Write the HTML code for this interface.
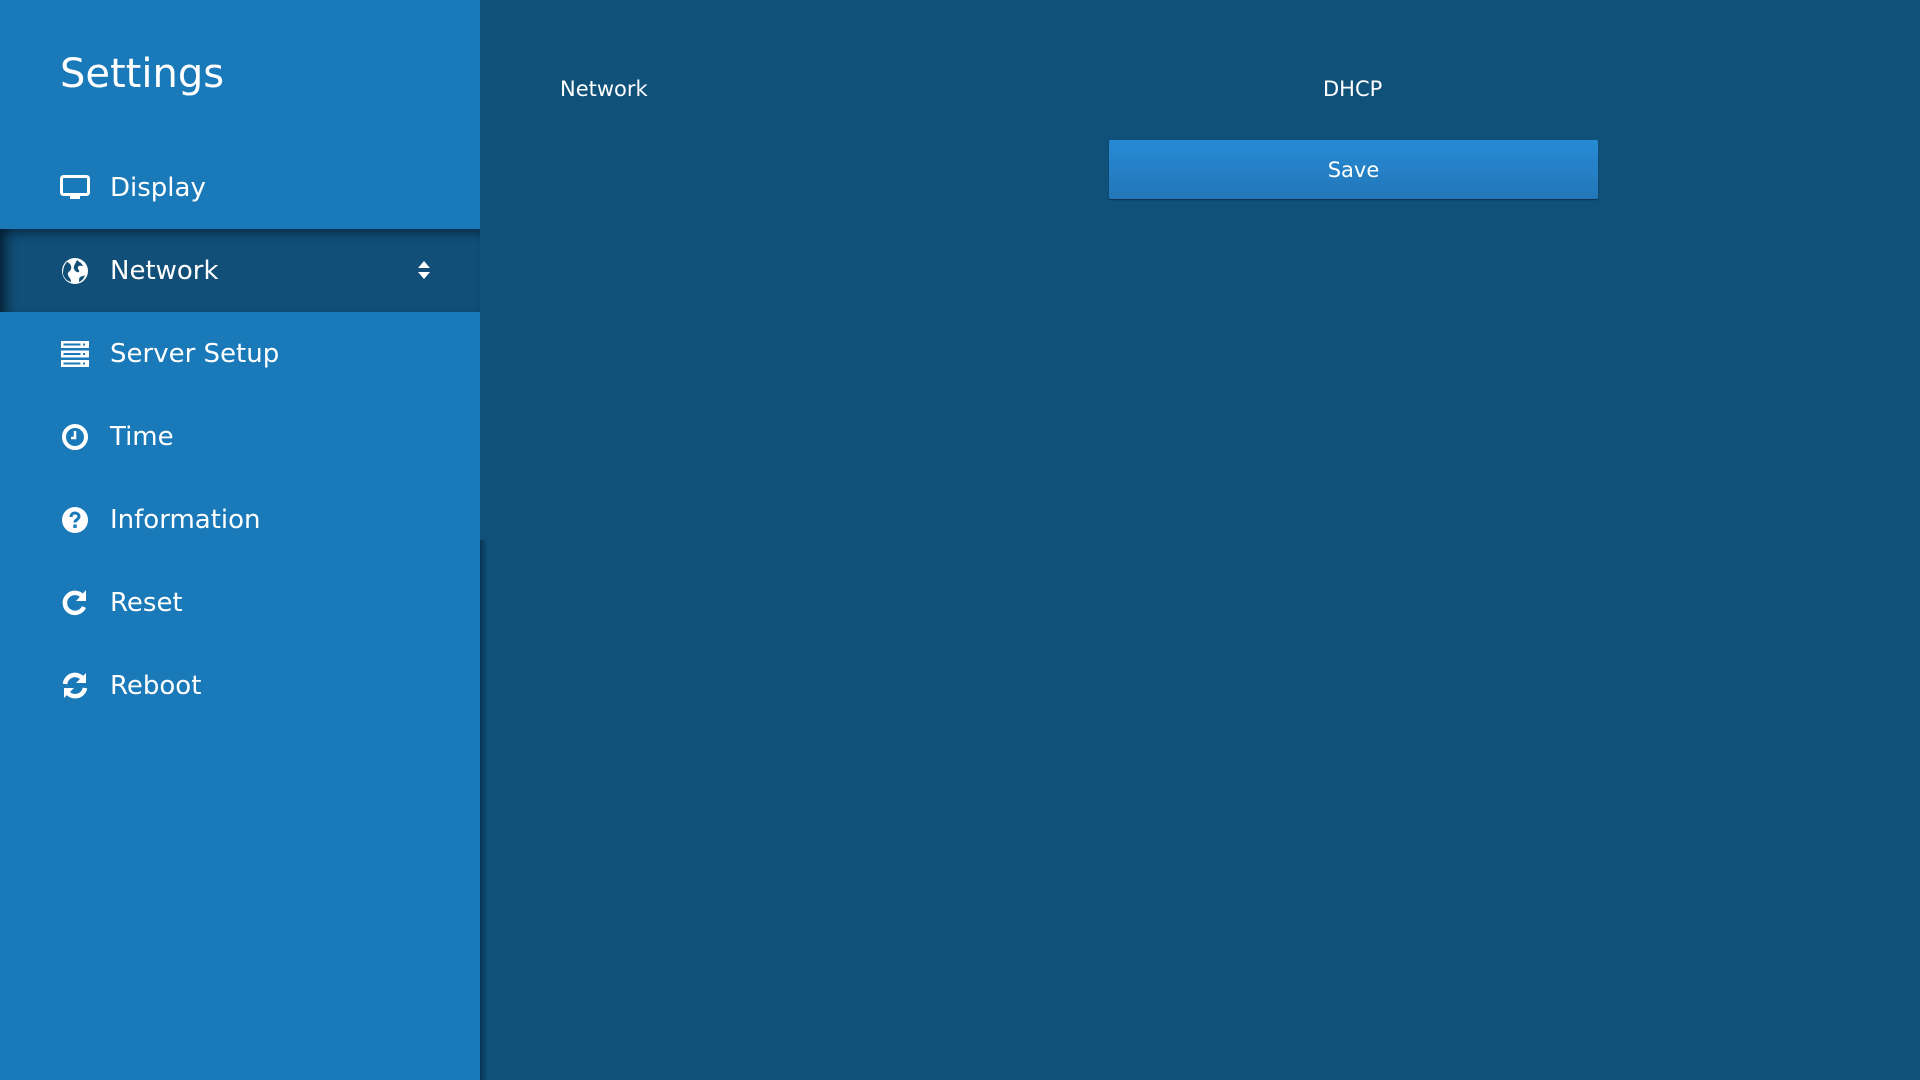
<!DOCTYPE html>
<html><head><meta charset="utf-8"><style>
html,body{margin:0;padding:0;width:1920px;height:1080px;overflow:hidden;background:#10517a;font-family:"DejaVu Sans","Liberation Sans",sans-serif;color:#fff}
#side{position:absolute;left:0;top:0;width:480px;height:1080px;background:#1a79b8}
#shade{position:absolute;left:480px;top:540px;width:8px;height:540px;background:linear-gradient(90deg,rgba(0,20,40,.45),rgba(0,20,40,0))}
h1{position:absolute;left:60px;top:46px;margin:0;font-weight:normal;font-size:40px;line-height:56px}
.row{position:absolute;left:0;width:480px;height:83px;}
.row .ic{position:absolute;left:60px;top:27px;width:30px;height:30px}
.row .t{position:absolute;left:110px;top:1px;line-height:83px;font-size:26px}
.act{background:#114f78;box-shadow:inset 0 10px 10px -6px rgba(0,20,40,.6),inset 14px 0 12px -8px rgba(0,0,0,.55)}
.lbl{position:absolute;font-size:21px;line-height:24px}
#save{position:absolute;left:1109px;top:140px;width:489px;height:59px;background:linear-gradient(#268ad5,#2477b8);border-radius:2px;box-shadow:0 1px 1px #0a2f4a;text-align:center;line-height:60px;font-size:21px}
</style></head><body>
<div id="side">
<h1>Settings</h1>
<div class="row" style="top:146px"><svg class="ic" viewBox="0 0 30 30"><rect x="1.5" y="3.5" width="27" height="18" rx="2" fill="none" stroke="#fff" stroke-width="3"/><rect x="10" y="22" width="10" height="4" fill="#fff"/></svg><span class="t">Display</span></div>
<div class="row act" style="top:229px;height:83px"><svg class="ic" viewBox="0 0 30 30"><circle cx="15" cy="15" r="13" fill="#fff"/><path d="M7 6c3 1 5 4 4 7s-4 3-3 6 3 3 3 7c-4-1-7-4-8-8 0-5 1-9 4-12zM17 4c2 2 5 3 6 6-2 0-4-1-5 1s2 3 1 5c-2 1-4-1-5-3s1-5 3-9zM20 21c2-1 4-1 5-2-1 3-3 6-6 7 0-2 0-4 1-5z" fill="#114f78"/></svg><span class="t">Network</span>
<svg style="position:absolute;left:417px;top:32px" width="14" height="18" viewBox="0 0 14 18"><path d="M7 0L13 7H1zM1 11H13L7 18z" fill="#fff"/></svg></div>
<div class="row" style="top:312px"><svg class="ic" viewBox="0 0 30 30"><g fill="#fff"><rect x="1" y="2" width="28" height="7"/><rect x="1" y="11.5" width="28" height="7"/><rect x="1" y="21" width="28" height="7"/></g><g fill="#1a79b8"><rect x="3.5" y="4.5" width="17" height="2"/><rect x="3.5" y="14" width="17" height="2"/><rect x="3.5" y="23.5" width="17" height="2"/><rect x="23" y="4.5" width="2" height="2"/><rect x="23" y="14" width="2" height="2"/><rect x="23" y="23.5" width="2" height="2"/></g></svg><span class="t">Server Setup</span></div>
<div class="row" style="top:395px"><svg class="ic" viewBox="0 0 30 30"><circle cx="15" cy="15" r="11" fill="none" stroke="#fff" stroke-width="4"/><path d="M15 9v7h-4" fill="none" stroke="#fff" stroke-width="2.5"/></svg><span class="t">Time</span></div>
<div class="row" style="top:478px"><svg class="ic" viewBox="0 0 30 30"><circle cx="15" cy="15" r="13" fill="#fff"/><path d="M11 12c0-3 2-4 4-4s4 1.5 4 3.5c0 3-4 3-4 6" fill="none" stroke="#1a79b8" stroke-width="3"/><rect x="13.3" y="19.5" width="3.4" height="3.4" fill="#1a79b8"/></svg><span class="t">Information</span></div>
<div class="row" style="top:561px"><svg class="ic" viewBox="0 0 30 30"><path d="M23 9A10 10 0 1 0 24 19" fill="none" stroke="#fff" stroke-width="4.5"/><path d="M26 2v11H16z" fill="#fff"/></svg><span class="t">Reset</span></div>
<div class="row" style="top:644px"><svg class="ic" viewBox="0 0 30 30"><path d="M5 13A10 10 0 0 1 23 8M25 17A10 10 0 0 1 7 21" fill="none" stroke="#fff" stroke-width="4.5"/><path d="M26 2v10H16zM4 27V17H14z" fill="#fff"/></svg><span class="t">Reboot</span></div>
</div>
<div id="shade"></div>
<div class="lbl" style="left:560px;top:77px">Network</div>
<div class="lbl" style="left:1323px;top:77px">DHCP</div>
<div id="save">Save</div>
</body></html>
